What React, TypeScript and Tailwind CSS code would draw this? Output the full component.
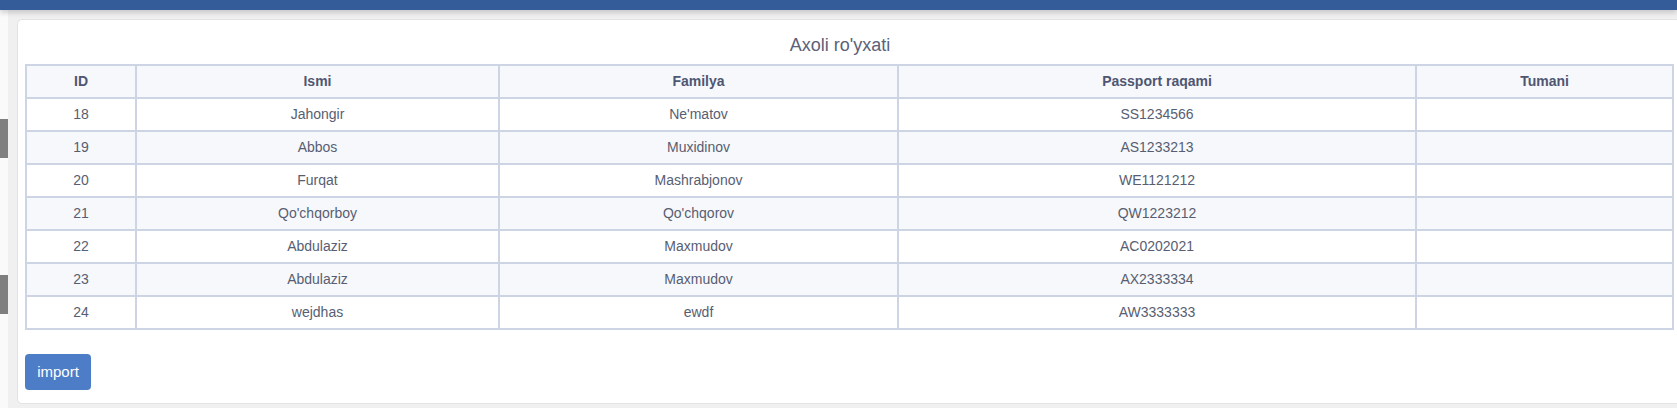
import React from 'react'

type Person = {
  id: number
  ism: string
  familya: string
  passport: string
  tuman: string
}

const people: Person[] = [
  { id: 18, ism: 'Jahongir', familya: "Ne'matov", passport: 'SS1234566', tuman: '' },
  { id: 19, ism: 'Abbos', familya: 'Muxidinov', passport: 'AS1233213', tuman: '' },
  { id: 20, ism: 'Furqat', familya: 'Mashrabjonov', passport: 'WE1121212', tuman: '' },
  { id: 21, ism: "Qo'chqorboy", familya: "Qo'chqorov", passport: 'QW1223212', tuman: '' },
  { id: 22, ism: 'Abdulaziz', familya: 'Maxmudov', passport: 'AC0202021', tuman: '' },
  { id: 23, ism: 'Abdulaziz', familya: 'Maxmudov', passport: 'AX2333334', tuman: '' },
  { id: 24, ism: 'wejdhas', familya: 'ewdf', passport: 'AW3333333', tuman: '' },
]

const headers = ['ID', 'Ismi', 'Familya', 'Passport raqami', 'Tumani']

export default function App() {
  return (
    <div className="h-[408px] w-full overflow-hidden bg-[#f0f0f0] font-['Liberation_Sans',Arial,sans-serif]">
      <div className="relative z-10 h-[10px] bg-[#335c98] shadow-[0_3px_5px_rgba(0,0,0,0.16)]" />
      <div className="flex">
        <aside className="flex h-[398px] w-[8px] shrink-0 flex-col bg-[#fafafa] pt-[109px]">
          <div className="h-[39px] bg-[#7f7f7f]" />
          <div className="mt-[117px] h-[39px] bg-[#7f7f7f]" />
        </aside>
        <main className="flex-1 pl-[9px] pt-[9px]">
          <div className="h-[385px] w-[1664px] rounded-[5px] border border-[#e3e3e3] bg-white pl-[7px] pt-[12px]">
            <h2 className="w-[1630px] text-center text-[18px] leading-[26px] text-[#5b6178]">
              Axoli ro'yxati
            </h2>
            <table className="mt-[6px] w-[1647px] table-fixed border-collapse text-[14px] text-[#585e72]">
              <colgroup>
                <col className="w-[110px]" />
                <col className="w-[363px]" />
                <col className="w-[399px]" />
                <col className="w-[518px]" />
                <col className="w-[257px]" />
              </colgroup>
              <thead>
                <tr className="h-[33px] bg-[#f6f8fb]">
                  {headers.map((h) => (
                    <th
                      key={h}
                      className="border-2 border-[#cdd4e4] p-0 text-center font-bold text-[#4f5672]"
                    >
                      {h}
                    </th>
                  ))}
                </tr>
              </thead>
              <tbody>
                {people.map((p, i) => (
                  <tr key={p.id} className={i % 2 === 1 ? 'h-[33px] bg-[#f6f8fb]' : 'h-[33px] bg-white'}>
                    <td className="border-2 border-[#cdd4e4] p-0 text-center">{p.id}</td>
                    <td className="border-2 border-[#cdd4e4] p-0 text-center">{p.ism}</td>
                    <td className="border-2 border-[#cdd4e4] p-0 text-center">{p.familya}</td>
                    <td className="border-2 border-[#cdd4e4] p-0 text-center">{p.passport}</td>
                    <td className="border-2 border-[#cdd4e4] p-0 text-center">{p.tuman}</td>
                  </tr>
                ))}
              </tbody>
            </table>
            <button className="mt-[24px] h-[36px] w-[66px] rounded-[4px] bg-[#4c7dc6] text-[15px] text-white">
              import
            </button>
          </div>
        </main>
      </div>
    </div>
  )
}
